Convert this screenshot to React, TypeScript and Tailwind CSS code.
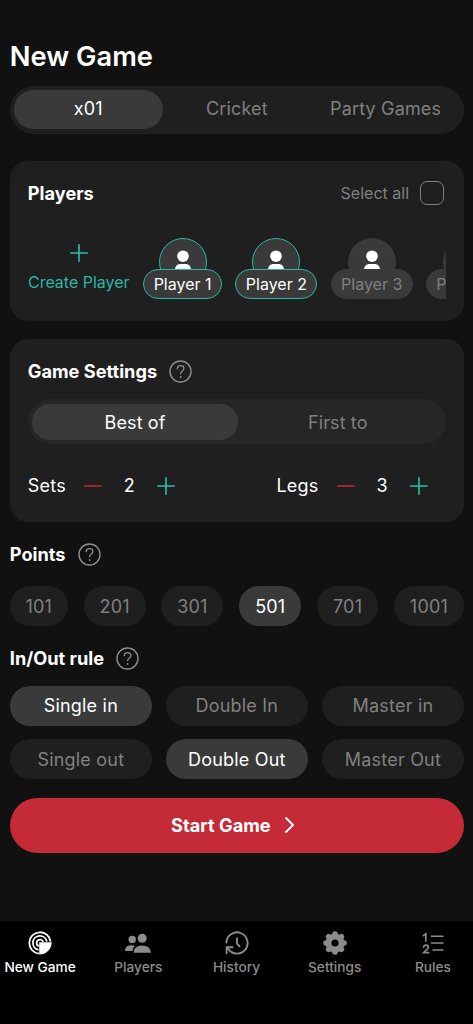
import { useState } from 'react'
import type { ReactNode } from 'react'
import clsx from 'clsx'

const POINTS = [
  { value: '101', width: 'w-[58px]' },
  { value: '201', width: 'w-[62px]' },
  { value: '301', width: 'w-[62px]' },
  { value: '501', width: 'w-[62px]' },
  { value: '701', width: 'w-[61px]' },
  { value: '1001', width: 'w-[70px]' },
]

const PLAYERS = [
  { name: 'Player 1', width: 'w-[79px]' },
  { name: 'Player 2', width: 'w-[82px]' },
  { name: 'Player 3', width: 'w-[82px]' },
  { name: 'Player 4', width: 'w-[82px]' },
]

const FORMATS = [
  { label: 'Best of', width: 'w-[206.5px]' },
  { label: 'First to', width: 'w-[199px]' },
]

const HelpIcon = () => (
  <svg className="w-[23px] h-[23px] text-[#8c8c8c]" viewBox="0 0 23 23" fill="none" stroke="currentColor" strokeLinecap="round">
    <circle cx="11.5" cy="11.5" r="10.5" strokeWidth="1.4" />
    <path d="M8.2 8.6c.2-1.900 1.500-2.900 3.400-2.900 1.900 0 3.300 1.100 3.300 2.800 0 1.400-.8 2-1.800 2.700-1 .7-1.500 1.200-1.500 2.500" strokeWidth="1.3" />
    <circle cx="11.6" cy="17" r=".9" fill="currentColor" stroke="none" />
  </svg>
)

const PlusIcon = () => (
  <svg className="w-[18px] h-[18px] text-[#2bbfae]" viewBox="0 0 18 18" fill="none" stroke="currentColor" strokeWidth="1.6" strokeLinecap="round">
    <path d="M9 .8v16.4M.8 9h16.4" />
  </svg>
)

const MinusIcon = () => (
  <svg className="w-[18px] h-[18px] text-[#c42b36]" viewBox="0 0 18 18" fill="none" stroke="currentColor" strokeWidth="1.6" strokeLinecap="round">
    <path d="M.8 9h16.4" />
  </svg>
)

const Heading = ({ children }: { children: ReactNode }) => (
  <div className="flex items-center gap-3 h-6">
    <h2 className="pt-px text-[18.2px] font-bold text-white">{children}</h2>
    <HelpIcon />
  </div>
)

type ChipProps = {
  label: string
  active: boolean
  onClick: () => void
  className?: string
}

const Chip = ({ label, active, onClick, className }: ChipProps) => (
  <button
    onClick={onClick}
    className={clsx(
      'h-10 rounded-full text-[18px] tracking-[0.2px]',
      active ? 'bg-[#3a3a3a] text-white' : 'bg-[#1f1f1f] text-[#808080]',
      className
    )}
  >
    {label}
  </button>
)

type PlayerProps = {
  name: string
  width: string
  selected: boolean
  onClick: () => void
}

const Player = ({ name, width, selected, onClick }: PlayerProps) => (
  <button onClick={onClick} className={clsx('flex flex-col items-center shrink-0', width)}>
    <span
      className={clsx(
        'flex justify-center w-12 h-12 rounded-full bg-[#3a3a3a] border',
        selected ? 'border-[#2bb5a5]' : 'border-[#3a3a3a]'
      )}
    >
      <svg className="w-4 h-8 mt-[11px] text-white" viewBox="0 0 16 32" fill="currentColor">
        <circle cx="8" cy="6.2" r="5.8" />
        <path d="M0 20c0-4 2.5-6 5.5-6h5c3 0 5.5 2 5.5 6z" />
      </svg>
    </span>
    <span
      className={clsx(
        'relative -mt-[17px] flex items-center justify-center w-full h-[30px] pb-px rounded-full bg-[#3a3a3a] border text-[16px]',
        selected ? 'border-[#2bb5a5] text-white' : 'border-[#3a3a3a] text-[#808080]'
      )}
    >
      {name}
    </span>
  </button>
)

type StepperProps = {
  label: string
  value: number
  onChange: (value: number) => void
}

const Stepper = ({ label, value, onChange }: StepperProps) => (
  <div className="flex items-center text-[18px] text-white">
    <span className="tracking-[0.2px]">{label}</span>
    <button className="ml-[18px]" onClick={() => onChange(Math.max(1, value - 1))}>
      <MinusIcon />
    </button>
    <span className="w-[55px] text-center">{value}</span>
    <button onClick={() => onChange(value + 1)}>
      <PlusIcon />
    </button>
  </div>
)

const TargetIcon = () => (
  <svg className="w-6 h-6" viewBox="0 0 24 24" fill="none" stroke="currentColor" strokeWidth="1.8">
    <path d="M10.8 22.6A10.7 10.7 0 1 1 22.6 10.6" />
    <path d="M10.5 18.8A7 7 0 1 1 18.8 10.6" />
    <path d="M10.8 15.2A3.4 3.4 0 1 1 15.2 10.8" />
    <path d="M11.2 11.2h12.4A12.2 12.2 0 0 1 11.2 23.6z" fill="currentColor" stroke="none" />
  </svg>
)

const PlayersIcon = () => (
  <svg className="w-[26px] h-6" viewBox="0 0 26 24" fill="currentColor">
    <circle cx="7.2" cy="8.4" r="3.7" />
    <circle cx="17.2" cy="7.3" r="4.5" />
    <path d="M0 20c0-3.600 2.400-5.700 6-5.700 1.600 0 2.900.2 4 .8-1.600 1.200-2.300 2.900-2.400 4.900z" />
    <path d="M8.7 21.8c0-4.400 2.900-7.400 8.500-7.400s8.600 3 8.600 7.400z" />
  </svg>
)

const HistoryIcon = () => (
  <svg className="w-6 h-6" viewBox="0 0 24 24" fill="none" stroke="currentColor" strokeWidth="1.9" strokeLinecap="round" strokeLinejoin="round">
    <path d="M1.4 11.5A10.6 10.6 0 1 1 2.4 16.5" />
    <path d="M1.6 22.2v-6h6" />
    <path d="M12 7.2v5.3l2.5 2.8" />
  </svg>
)

const SettingsIcon = () => (
  <svg className="w-6 h-6" viewBox="0 0 24 24">
    <g fill="currentColor">
      <circle cx="12" cy="12" r="9.6" />
      {[0, 45, 90, 135, 180, 225, 270, 315].map((angle) => (
        <circle key={angle} cx="12" cy="3" r="2.8" transform={`rotate(${angle} 12 12)`} />
      ))}
    </g>
    <circle cx="12" cy="12" r="3.6" fill="black" />
  </svg>
)

const RulesIcon = () => (
  <svg className="w-6 h-6" viewBox="0 0 24 24" fill="none" stroke="currentColor" strokeWidth="1.5" strokeLinecap="round">
    <path d="M10.5 5.200h11.500M10.500 12h11.500M12 19h10" />
    <path d="M2.3 4.600L4.800 2.800V10" strokeWidth="1.7" />
    <path d="M2.6 16.200c.2-1.300 1.100-2 2.400-2s2.300.7 2.300 2c0 1.700-2.300 2.800-4.600 5.400h5" strokeWidth="1.7" />
  </svg>
)

const TABS = [
  { label: 'New Game', icon: TargetIcon },
  { label: 'Players', icon: PlayersIcon },
  { label: 'History', icon: HistoryIcon },
  { label: 'Settings', icon: SettingsIcon },
  { label: 'Rules', icon: RulesIcon },
]

const App = () => {
  const [mode, setMode] = useState('x01')
  const [selected, setSelected] = useState(['Player 1', 'Player 2'])
  const [format, setFormat] = useState('Best of')
  const [sets, setSets] = useState(2)
  const [legs, setLegs] = useState(3)
  const [points, setPoints] = useState('501')
  const [inRule, setInRule] = useState('Single in')
  const [outRule, setOutRule] = useState('Double Out')
  const [tab, setTab] = useState('New Game')

  const togglePlayer = (name: string) => {
    setSelected(selected.includes(name) ? selected.filter((p) => p !== name) : [...selected, name])
  }

  const toggleAll = () => {
    setSelected(selected.length === PLAYERS.length ? [] : PLAYERS.map((p) => p.name))
  }

  return (
    <div className="flex flex-col h-screen overflow-hidden bg-[#111111] font-['Inter',sans-serif]">
      <main className="flex-1 pl-[9.8px] pr-[9px] pt-[37px]">
        <h1 className="h-10 leading-10 text-[27.3px] font-semibold text-white">New Game</h1>

        {/* Game mode */}
        <div className="mt-[9px] flex h-12 py-1 pl-1 pr-1 rounded-full bg-[#1f1f1f]">
          {['x01', 'Cricket', 'Party Games'].map((m) => (
            <button
              key={m}
              onClick={() => setMode(m)}
              className={clsx(
                'flex-1 h-[39px] pb-[2px] rounded-full text-[18px] tracking-[0.15px]',
                mode === m ? 'bg-[#3a3a3a] text-white' : 'text-[#808080]'
              )}
            >
              {m}
            </button>
          ))}
        </div>

        {/* Players */}
        <section className="mt-[27px] h-40 px-[18px] pt-5 rounded-[18px] bg-[#1f1f1f]">
          <div className="flex items-center justify-between h-6">
            <h2 className="pt-px text-[18.2px] font-bold text-white">Players</h2>
            <button onClick={toggleAll} className="flex items-center gap-[11px] mr-[2px] text-[16px] text-[#808080]">
              Select all
              <span className="w-6 h-6 rounded-[7px] border-[1.5px] border-[#808080]" />
            </button>
          </div>
          <div className="mt-[33px] flex gap-[13.3px] overflow-hidden">
            <button className="flex flex-col items-center shrink-0 w-[102px] pt-[6px] text-[16px] text-[#2bb5a5]">
              <PlusIcon />
              <span className="mt-2 whitespace-nowrap">Create Player</span>
            </button>
            {PLAYERS.map((p) => (
              <Player
                key={p.name}
                name={p.name}
                width={p.width}
                selected={selected.includes(p.name)}
                onClick={() => togglePlayer(p.name)}
              />
            ))}
          </div>
        </section>

        {/* Game settings */}
        <section className="mt-[18px] h-[183px] px-[18px] pt-5 rounded-[18px] bg-[#1f1f1f]">
          <Heading>Game Settings</Heading>
          <div className="mt-4 flex h-[45px] pt-[5px] pb-1 pl-1 rounded-full bg-[#262626]">
            {FORMATS.map((f) => (
              <button
                key={f.label}
                onClick={() => setFormat(f.label)}
                className={clsx(
                  'pt-px rounded-full text-[18px] tracking-[0.1px]',
                  format === f.label ? 'bg-[#3a3a3a] text-white' : 'text-[#808080]',
                  f.width
                )}
              >
                {f.label}
              </button>
            ))}
          </div>
          <div className="mt-7 flex justify-between pr-[18.5px]">
            <Stepper label="Sets" value={sets} onChange={setSets} />
            <Stepper label="Legs" value={legs} onChange={setLegs} />
          </div>
        </section>

        {/* Points */}
        <div className="mt-5">
          <Heading>Points</Heading>
        </div>
        <div className="mt-5 flex justify-between">
          {POINTS.map((p) => (
            <Chip
              key={p.value}
              label={p.value}
              active={points === p.value}
              onClick={() => setPoints(p.value)}
              className={p.width}
            />
          ))}
        </div>

        {/* In/Out rule */}
        <div className="mt-5">
          <Heading>In/Out rule</Heading>
        </div>
        <div className="mt-[15.5px] grid grid-cols-3 gap-x-[14px] gap-y-[13.5px]">
          {['Single in', 'Double In', 'Master in'].map((r) => (
            <Chip key={r} label={r} active={inRule === r} onClick={() => setInRule(r)} />
          ))}
          {['Single out', 'Double Out', 'Master Out'].map((r) => (
            <Chip key={r} label={r} active={outRule === r} onClick={() => setOutRule(r)} />
          ))}
        </div>

        <button className="mt-[18.5px] flex items-center justify-center gap-[14px] w-full h-[55px] pr-[9px] rounded-full bg-[#c42b36] text-[18.2px] font-bold text-white">
          <span className="pt-[2px]">Start Game</span>
          <svg className="w-[9px] h-4" viewBox="0 0 9 16" fill="none" stroke="currentColor" strokeWidth="1.8" strokeLinecap="round" strokeLinejoin="round">
            <path d="M1 1l7 7-7 7" />
          </svg>
        </button>
      </main>

      <nav className="flex h-[103px] -mx-[9px] pt-[10px] bg-black">
        {TABS.map(({ label, icon: Icon }) => (
          <button
            key={label}
            onClick={() => setTab(label)}
            className={clsx(
              'flex flex-1 flex-col items-center text-[13.7px] font-medium',
              tab === label ? 'text-white' : 'text-[#8c8c8c]'
            )}
          >
            <Icon />
            <span className="mt-[2px] leading-5 whitespace-nowrap">{label}</span>
          </button>
        ))}
      </nav>
    </div>
  )
}

export default App
